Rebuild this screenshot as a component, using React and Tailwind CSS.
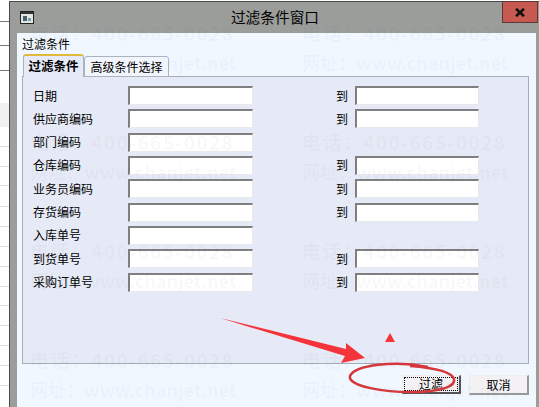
import React from "react";

const FIELDS = [
  { label: "日期", to: true },
  { label: "供应商编码", to: true },
  { label: "部门编码", to: false },
  { label: "仓库编码", to: true },
  { label: "业务员编码", to: true },
  { label: "存货编码", to: true },
  { label: "入库单号", to: false },
  { label: "到货单号", to: true },
  { label: "采购订单号", to: true },
];

// background sheet rows peeking out left of the dialog
const SHEET_ROWS = [
  { h: "h-[22px]", cls: "border-[#777]" },
  { h: "h-[24px]", cls: "border-[#777]" },
  { h: "h-[25px]", cls: "border-[#777]" },
  { h: "h-[32px]", cls: "border-transparent" },
  { h: "h-[24px]", cls: "border-transparent bg-[#f1f1f1]" },
  { h: "h-[20px]", cls: "border-[#ddd]" },
  { h: "h-[20px]", cls: "border-[#ddd]" },
  { h: "h-[19px]", cls: "border-[#ddd]" },
  { h: "h-[21px]", cls: "border-[#ddd]" },
  { h: "h-[20px]", cls: "border-[#ddd]" },
  { h: "h-[20px]", cls: "border-[#ddd]" },
  { h: "h-[20px]", cls: "border-[#ddd]" },
  { h: "h-[20px]", cls: "border-[#ddd]" },
  { h: "h-[19px]", cls: "border-[#ddd]" },
  { h: "h-[20px]", cls: "border-[#ddd]" },
  { h: "h-[20px]", cls: "border-[#ddd]" },
  { h: "h-[20px]", cls: "border-[#ddd]" },
  { h: "h-[20px]", cls: "border-[#ddd]" },
];

const WATERMARK_ROWS = [20, 129, 238, 347];

function Field({ className }) {
  return (
    <input
      type="text"
      className={`h-[19px] bg-white border-t-2 border-l-2 border-r border-b border-t-[#7f7f7f] border-l-[#7f7f7f] border-r-[#e8e8ee] border-b-[#e8e8ee] ${className}`}
    />
  );
}

function Watermarks() {
  return (
    <div className="absolute inset-0 pointer-events-none">
      {WATERMARK_ROWS.map((top) => (
        <div key={top} style={{ top }} className="absolute left-0 right-0 h-[60px]">
          {[30, 302].map((left) => (
            <div key={left} style={{ left }} className="absolute top-0 text-[#2a3a6a]/[0.04] font-bold">
              <p className="text-[19px] leading-[26px] tracking-[1.4px] whitespace-nowrap">电话：400-665-0028</p>
              <p className="text-[18px] leading-[26px] mt-[3px] whitespace-nowrap">网址：www.chanjet.net</p>
            </div>
          ))}
        </div>
      ))}
    </div>
  );
}

function Annotations() {
  return (
    <svg className="absolute inset-0 pointer-events-none" width="539" height="407" viewBox="0 0 539 407">
      <polygon
        points="220,318 346,349 346,343 365,358 341,363 345,356"
        fill="#f5333a"
      />
      <polygon points="390,333 395,342 385,342" fill="#f5333a" />
      <path
        d="M 428 367 C 395 360 355 365 350 376 C 347 386 385 393 418 392 C 440 391 456 387 454 379 C 452 372 436 368 410 366"
        fill="none"
        stroke="#d5383c"
        strokeWidth="2.5"
      />
    </svg>
  );
}

export default function App() {
  return (
    <div className="relative flex w-[539px] h-[407px] overflow-hidden bg-white text-[12px] text-black font-['Noto_Sans_CJK_SC',sans-serif]">
      <div className="w-[9px] shrink-0 flex flex-col">
        {SHEET_ROWS.map((row, i) => (
          <div key={i} className={`${row.h} shrink-0 border-b ${row.cls}`} />
        ))}
      </div>

      <div className="flex-1 mt-px flex flex-col bg-[#9b9d9a] border-l border-t border-[#4a4a4a]">
        <div className="h-[31px] shrink-0 flex items-start relative">
          <svg className="mt-[9px] ml-[10px]" width="14" height="13" viewBox="0 0 14 13">
            <rect x="0.5" y="0.5" width="13" height="12" fill="#dfe8e4" stroke="#222" />
            <rect x="1" y="1" width="12" height="2" fill="#333" />
            <rect x="3" y="5" width="4" height="5" fill="#48606a" />
            <rect x="8" y="7" width="3" height="3" fill="#7a9aa5" />
          </svg>
          <p className="flex-1 text-center text-[14.7px] leading-[20px] mt-[5px] pl-[14px]">过滤条件窗口</p>
          <div className="w-[36px] h-[22px] mr-px -mt-px flex items-center justify-center bg-[#c65a50] border border-[#5a3a36]">
            <svg width="10" height="9" viewBox="0 0 10 9">
              <path d="M1 0.8 L9 8.2 M9 0.8 L1 8.2" stroke="#111" strokeWidth="2.6" />
            </svg>
          </div>
        </div>

        <div className="ml-[7px] mr-[3px] flex-1 bg-[#f0f7ff] flex flex-col pl-[5px] pr-[7px]">
          <p className="h-[20px] leading-[20px] shrink-0 mt-px">过滤条件</p>

          <div className="flex items-end h-[23px] shrink-0 ml-px relative z-10 -mb-px">
            <div className="w-[61px] h-[23px] bg-[#e6eaf6] border-t-2 border-t-[#e2b93b] border-x border-x-[#a9b4bf] rounded-t-[3px] flex items-center justify-center font-bold text-[12.5px]">
              过滤条件
            </div>
            <div className="w-[85px] h-[21px] bg-[#f2f5fb] border border-[#a9b4bf] rounded-t-[3px] flex items-center justify-center">
              高级条件选择
            </div>
          </div>

          <div className="h-[288px] shrink-0 bg-[#e6eaf6] border border-[#a3adb6] pt-[9px] pl-[10px] flex flex-col gap-[4.33px]">
            {FIELDS.map((f) => (
              <div key={f.label} className="flex items-center h-[19px]">
                <span className="w-[95px] shrink-0">{f.label}</span>
                <Field className="w-[125px] shrink-0" />
                {f.to && (
                  <>
                    <span className="ml-[83px] w-[19px] shrink-0">到</span>
                    <Field className="w-[124px] shrink-0" />
                  </>
                )}
              </div>
            ))}
          </div>

          <div className="flex justify-end gap-[8px] mt-[11px]">
            <button className="w-[59px] h-[19px] bg-[#f3f1f3] border border-[#eee] border-r-2 border-b-2 border-r-[#555] border-b-[#555] flex items-center justify-center p-px">
              <span className="w-full h-full border border-dotted border-black flex items-center justify-center leading-none">过滤</span>
            </button>
            <button className="w-[60px] h-[20px] bg-[#f3f1f3] border border-[#eee] border-r-2 border-b-2 border-r-[#999] border-b-[#999] flex items-center justify-center leading-none">
              取消
            </button>
          </div>
        </div>
      </div>

      <Watermarks />
      <Annotations />
    </div>
  );
}
